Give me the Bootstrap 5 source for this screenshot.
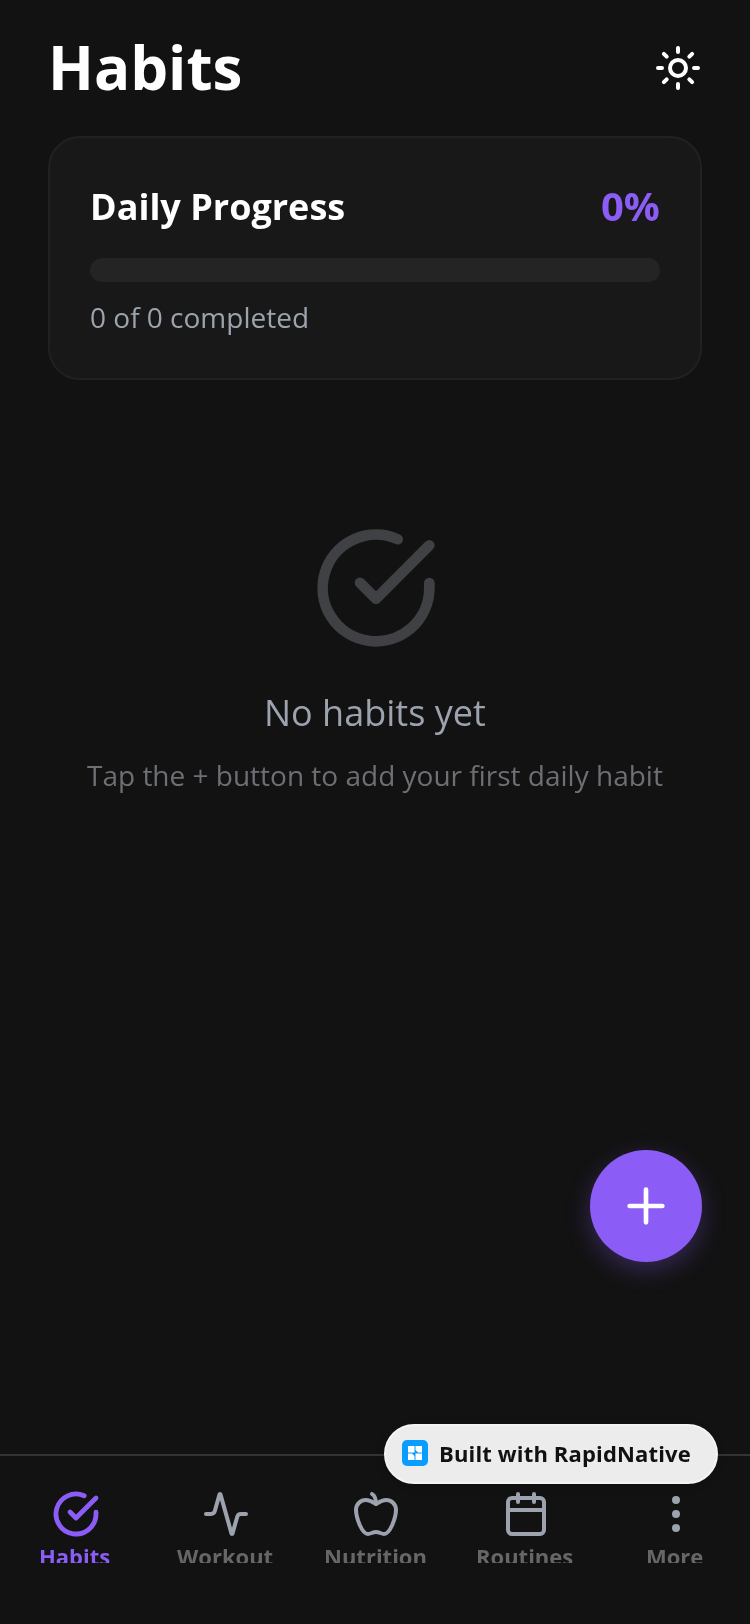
<!DOCTYPE html>
<html lang="en"><head><meta charset="utf-8"><title>Habits</title>
<link href="https://cdn.jsdelivr.net/npm/bootstrap@5.3.0/dist/css/bootstrap.min.css" rel="stylesheet">
<style>
html,body{margin:0;background:#121212;}
body{font-family:"Open Sans","Liberation Sans",sans-serif;}
.app-root{position:relative;width:750px;height:1624px;overflow:hidden;background:#121212;}
.top-head{padding:24px 48px 0 48px;height:136px;}
.app-title{font-size:60px;line-height:86px;font-weight:700;color:#fff;margin:0;will-change:transform;}
.progress-panel{margin:0 48px;height:244px;background:#181818;border:2px solid #212121;border-radius:32px;padding:40px;}
.panel-title{font-size:36px;line-height:56px;font-weight:700;color:#fff;position:relative;top:1px;will-change:transform;}
.panel-pct{font-size:40px;line-height:56px;font-weight:700;color:#8b5cf6;will-change:transform;}
.track{height:24px;border-radius:12px;background:#242424;margin-top:24px;}
.panel-sub{font-size:28px;line-height:38px;color:#9ca3af;margin-top:16px;will-change:transform;}
.empty-zone{padding-top:144px;}
.empty-icon{display:block;width:128px;height:128px;color:#404145;margin-left:2px;}
.empty-title{font-size:36px;line-height:48px;color:#9ca3af;margin-top:37px;will-change:transform;}
.empty-sub{font-size:28px;line-height:38px;color:#6e6f74;margin-top:19px;will-change:transform;}
.tab-strip{height:170px;border-top:2px solid #333;}
.tab-cell{width:150px;padding-top:34px;}
.tab-ic{display:block;width:48px;height:48px;color:#9ca3af;margin-left:2px;}
.tab-cell.is-on .tab-ic{color:#8b5cf6;}
.tab-cell.is-on svg.ln{stroke-width:2.4;}
.tab-label{height:25px;overflow:hidden;font-size:22px;line-height:36px;font-weight:700;color:#666;white-space:nowrap;will-change:transform;}
.tab-cell.is-on .tab-label{color:#8b5cf6;}
.fab-add{position:absolute;left:590px;top:1150px;width:112px;height:112px;border-radius:50%;background:#8b5cf6;border:0;padding:0;box-shadow:0 8px 24px rgba(139,92,246,.3);}
.fab-add svg{width:56px;height:56px;color:#fff;}
.built-pill{position:absolute;left:384px;top:1424px;width:334px;height:60px;border-radius:30px;background:#ececec;border:2px solid #f4f4f4;box-shadow:0 2px 10px rgba(0,0,0,.2);padding:0 0 2px 15.5px;gap:11.5px;}
.built-logo{width:26px;height:26px;border-radius:5px;background:#0a9dff;}
.built-text{font-size:22px;line-height:32px;font-weight:700;letter-spacing:.15px;color:#111;white-space:nowrap;will-change:transform;}
svg.ln{fill:none;stroke:currentColor;stroke-width:2;stroke-linecap:round;stroke-linejoin:round;}
</style></head>
<body>
<div class="app-root d-flex flex-column">
  <div class="flex-grow-1">
    <div class="top-head d-flex justify-content-between align-items-start">
      <h1 class="app-title">Habits</h1>
      <svg class="ln" width="48" height="48" viewBox="0 0 24 24" style="margin-top:20px;color:#fff"><circle cx="12" cy="12" r="4"/><path d="M12 2v2M12 20v2M4.93 4.93l1.41 1.41M17.66 17.66l1.41 1.41M2 12h2M20 12h2M6.34 17.66l-1.41 1.41M19.07 4.93l-1.41 1.41"/></svg>
    </div>
    <div class="progress-panel">
      <div class="d-flex justify-content-between align-items-center">
        <span class="panel-title">Daily Progress</span><span class="panel-pct">0%</span>
      </div>
      <div class="track"></div>
      <div class="panel-sub">0 of 0 completed</div>
    </div>
    <div class="empty-zone d-flex flex-column align-items-center text-center">
      <svg class="ln empty-icon" viewBox="0 0 24 24"><path d="M22 11.08V12a10 10 0 1 1-5.93-9.14"/><path d="M22 4 12 14.01l-3-3"/></svg>
      <div class="empty-title">No habits yet</div>
      <div class="empty-sub">Tap the + button to add your first daily habit</div>
    </div>
  </div>
  <div class="tab-strip d-flex">
    <div class="tab-cell is-on d-flex flex-column align-items-center">
      <svg class="ln tab-ic" viewBox="0 0 24 24"><path d="M22 11.08V12a10 10 0 1 1-5.93-9.14"/><path d="M22 4 12 14.01l-3-3"/></svg>
      <div class="tab-label">Habits</div>
    </div>
    <div class="tab-cell d-flex flex-column align-items-center">
      <svg class="ln tab-ic" viewBox="0 0 24 24"><path d="M22 12h-2.48a2 2 0 0 0-1.93 1.46l-2.35 8.36a.25.25 0 0 1-.48 0L9.24 2.18a.25.25 0 0 0-.48 0l-2.35 8.36A2 2 0 0 1 4.49 12H2"/></svg>
      <div class="tab-label">Workout</div>
    </div>
    <div class="tab-cell d-flex flex-column align-items-center">
      <svg class="ln tab-ic" viewBox="0 0 24 24"><path d="M12 20.94c1.5 0 2.75 1.06 4 1.06 3 0 6-8 6-12.22A4.91 4.91 0 0 0 17 5c-2.22 0-4 1.44-5 2-1-.56-2.78-2-5-2a4.9 4.9 0 0 0-5 4.78C2 14 5 22 8 22c1.25 0 2.5-1.06 4-1.06Z"/><path d="M10 2c1 .5 2 2 2 5"/></svg>
      <div class="tab-label">Nutrition</div>
    </div>
    <div class="tab-cell d-flex flex-column align-items-center">
      <svg class="ln tab-ic" viewBox="0 0 24 24"><path d="M8 2v4M16 2v4M3 10h18"/><rect x="3" y="4" width="18" height="18" rx="2"/></svg>
      <div class="tab-label">Routines</div>
    </div>
    <div class="tab-cell d-flex flex-column align-items-center">
      <svg class="ln tab-ic" viewBox="0 0 24 24"><circle cx="12" cy="12" r="1"/><circle cx="12" cy="5" r="1"/><circle cx="12" cy="19" r="1"/></svg>
      <div class="tab-label">More</div>
    </div>
  </div>
  <button class="fab-add d-flex align-items-center justify-content-center" aria-label="Add habit"><svg class="ln" viewBox="0 0 24 24"><path d="M5 12h14M12 5v14"/></svg></button>
  <div class="built-pill d-flex align-items-center">
    <svg class="built-logo flex-shrink-0" viewBox="0 0 26 26"><path fill="#fff" d="M6 6h6.5v6.5H6zM13.5 6H20v6.5H16L13.5 10zM6 13.5H10l2.5 2.5V20H6zM13.5 13.5H20V20h-6.5z"/></svg>
    <span class="built-text">Built with RapidNative</span>
  </div>
</div>
</body></html>
